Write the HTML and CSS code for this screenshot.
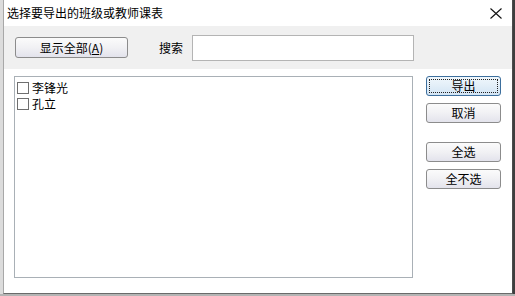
FILE: index.html
```html
<!DOCTYPE html>
<html lang="zh">
<head>
<meta charset="utf-8">
<title>选择要导出的班级或教师课表</title>
<link rel="stylesheet" href="styles.css">
</head>
<body>
<div class="win">
  <div class="titlebar">
    <span class="title">选择要导出的班级或教师课表</span>
    <svg class="close" width="12" height="11" viewBox="0 0 12 11"><path d="M0.5 0.5 L11.5 10.5 M11.5 0.5 L0.5 10.5" stroke="#111" stroke-width="1.1" fill="none"/></svg>
  </div>
  <div class="toolbar">
    <button class="btn btn-all">显示全部(<u>A</u>)</button>
    <span class="label">搜索</span>
    <input class="search" type="text">
  </div>
  <div class="main">
    <div class="list">
      <div class="item"><span class="check"></span><span>李锋光</span></div>
      <div class="item"><span class="check"></span><span>孔立</span></div>
    </div>
    <div class="side">
      <button class="btn side-btn default"><span class="focus">导出</span></button>
      <button class="btn side-btn">取消</button>
      <button class="btn side-btn gap">全选</button>
      <button class="btn side-btn">全不选</button>
    </div>
  </div>
</div>
</body>
</html>
```
FILE: styles.css
```css
html, body {
  margin: 0;
  padding: 0;
}
body {
  width: 515px;
  height: 296px;
  overflow: hidden;
  background:
    linear-gradient(to bottom, transparent 0, transparent 294px, #b4b4b4 294px),
    linear-gradient(to right, #dcdcdc 0, #dcdcdc 3px, #3e3e3e 3px);
  font-family: "Noto Sans CJK SC", "Noto Sans", sans-serif;
  font-size: 12px;
  color: #000;
}
.win {
  width: 508px;
  height: 293px;
  margin-left: 3px;
  border-left: 1px solid #a8a8a8;
  border-right: 1px solid #4c4c4c;
  border-bottom: 1px solid #6a6a6a;
  background: #fff;
  display: flex;
  flex-direction: column;
}
.titlebar {
  height: 26px;
  flex: none;
  display: flex;
  align-items: center;
  justify-content: space-between;
  padding: 0 10px 0 3px;
  font-size: 12px;
  line-height: 1;
}
.close {
  display: block;
  margin-top: 1px;
}
.toolbar {
  height: 43px;
  flex: none;
  background: #f0f0f0;
  display: flex;
  align-items: center;
  padding-left: 11px;
}
.btn {
  font-family: inherit;
  font-size: 12px;
  color: #000;
  background: linear-gradient(#fbfbfb, #f1f1f4 50%, #e3e3ec);
  border: 1px solid #8c8c8c;
  border-radius: 3px;
  padding: 0;
  margin: 0;
  line-height: 1;
  display: flex;
  align-items: center;
  justify-content: center;
}
.btn-all {
  width: 113px;
  height: 21px;
}
.label {
  margin-left: 31px;
  line-height: 1;
}
.search {
  margin: 0 0 0 9px;
  width: 222px;
  height: 26px;
  box-sizing: border-box;
  border: 1px solid #b4b4b4;
  background: #fff;
  padding: 0;
}
.main {
  flex: 1;
  display: flex;
  align-items: flex-start;
  padding: 7px 0 0 10px;
}
.list {
  width: 399px;
  height: 202px;
  box-sizing: border-box;
  border: 1px solid #a9b0b6;
  padding: 3px 0 0 2px;
}
.item {
  height: 16px;
  display: flex;
  align-items: center;
  line-height: 1;
}
.check {
  width: 10px;
  height: 10px;
  border: 1px solid #6f6f6f;
  background: #fff;
  margin-right: 3px;
  flex: none;
}
.side {
  margin-left: 13px;
  display: flex;
  flex-direction: column;
}
.side-btn {
  width: 75px;
  height: 20px;
  margin-bottom: 7px;
}
.side-btn.gap {
  margin-top: 12px;
}
.default {
  border-color: #3d6f9d;
  background: linear-gradient(#f0f7fc, #e2eef8 50%, #d2e4f4);
  padding: 2px;
  box-sizing: border-box;
}
.focus {
  flex: 1;
  align-self: stretch;
  display: flex;
  align-items: center;
  justify-content: center;
  border: 1px dotted #222;
}
```
